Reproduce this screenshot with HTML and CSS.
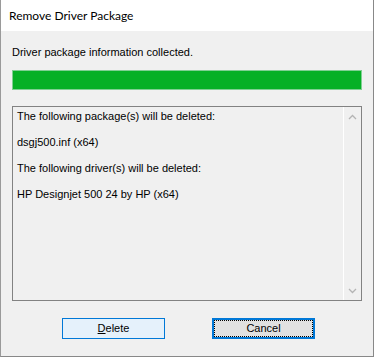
FILE: index.html
```html
<!DOCTYPE html>
<html lang="en">
<head>
    <meta charset="UTF-8">
    <title>Remove Driver Package</title>
    <link rel="stylesheet" href="styles.css">
</head>
<body>
    <div class="window">
        <div class="titlebar">Remove Driver Package</div>

        <div class="content">
            <p class="status">Driver package information collected.</p>
            <div class="progress"><div class="progress-fill" style="width: 100%"></div></div>

            <div class="listbox">
                <div class="list-text">
                    <p>The following package(s) will be deleted:</p>
                    <p>dsgj500.inf (x64)</p>
                    <p>The following driver(s) will be deleted:</p>
                    <p>HP Designjet 500 24 by HP (x64)</p>
                </div>
                <div class="scrollbar">
                    <svg width="9" height="6" viewBox="0 0 9 6"><path d="M1 5 L4.5 1.5 L8 5" fill="none" stroke="#b4b4b4" stroke-width="1.3"/></svg>
                    <svg width="9" height="6" viewBox="0 0 9 6"><path d="M1 1 L4.5 4.5 L8 1" fill="none" stroke="#b4b4b4" stroke-width="1.3"/></svg>
                </div>
            </div>

            <div class="buttons">
                <button class="btn btn-hover"><u>D</u>elete</button>
                <button class="btn btn-focus">Cancel</button>
            </div>
        </div>
    </div>
</body>
</html>
```

FILE: styles.css
```css
* {
    margin: 0;
    padding: 0;
    box-sizing: border-box;
}

body {
    font-family: 'Liberation Sans', Arial, sans-serif;
    font-size: 11px;
    color: #000;
    background: #fff;
}

.window {
    width: 374px;
    height: 357px;
    border: 1px solid #9a9a9a;
    border-top: none;
    border-right-color: #888;
    border-bottom-color: #888;
    display: flex;
    flex-direction: column;
}

.titlebar {
    height: 31px;
    line-height: 31px;
    padding-left: 8px;
    background: #fff;
    font-family: Lato, 'Liberation Sans', sans-serif;
    font-size: 12px;
}

.content {
    flex: 1;
    background: #f0f0f0;
    padding: 14px 11px 0 11px;
}

.status {
    line-height: 15px;
}

.progress {
    margin-top: 10px;
    height: 20px;
    border: 1px solid #80cf92;
    background: #e6e6e6;
}

.progress-fill {
    height: 100%;
    background: #06b025;
}

.listbox {
    margin-top: 16px;
    height: 195px;
    border: 1px solid #828282;
    display: flex;
}

.list-text {
    flex: 1;
    padding: 3px 0 0 4px;
    line-height: 13px;
}

.list-text p {
    margin-bottom: 13px;
}

.scrollbar {
    width: 18px;
    border-left: 1px solid #fff;
    display: flex;
    flex-direction: column;
    justify-content: space-between;
    align-items: center;
    padding: 7px 0 6px 0;
}

.scrollbar svg {
    display: block;
}

.buttons {
    margin-top: 17px;
    padding-left: 50px;
    display: flex;
    gap: 47px;
}

.btn {
    width: 103px;
    height: 21px;
    font-family: inherit;
    font-size: 11px;
    color: #000;
    line-height: 17px;
}

.btn-hover {
    background: #e5f1fb;
    border: 1px solid #0078d7;
}

.btn-focus {
    background: #e1e1e1;
    border: 2px solid #0078d7;
    outline: 1px dotted #000;
    outline-offset: -3px;
}
```
